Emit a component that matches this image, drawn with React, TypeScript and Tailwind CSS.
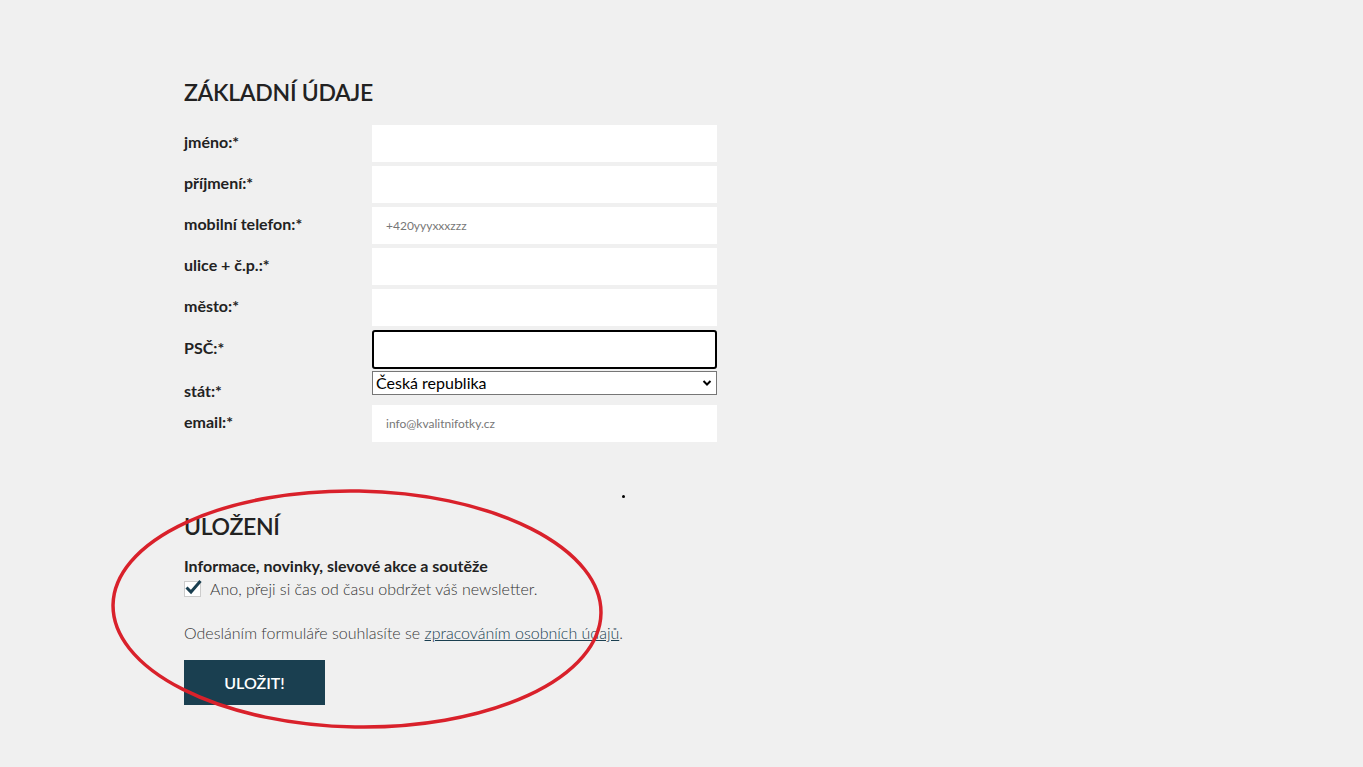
import React from "react";

const rows: { label: string; placeholder?: string; kind?: string }[] = [
  { label: "jméno:*" },
  { label: "příjmení:*" },
  { label: "mobilní telefon:*", placeholder: "+420yyyxxxzzz" },
  { label: "ulice + č.p.:*" },
  { label: "město:*" },
  { label: "PSČ:*", kind: "focus" },
];

export default function App() {
  return (
    <div
      className="relative w-full min-h-[767px] bg-[#f0f0f0] text-[#222]"
      style={{ fontFamily: "'Source Sans Pro', Lato, 'Noto Sans', sans-serif" }}
    >
      <div className="pl-[184px] pt-[78px]">
        <h2 className="text-[23px] font-semibold leading-[28px] tracking-[-0.3px] text-[#222]">ZÁKLADNÍ ÚDAJE</h2>
        <div className="mt-[19px] flex flex-col gap-[4px] w-[533px]">
          {rows.map((r) => (
            <div key={r.label} className="flex items-center">
              <div className="w-[188px] text-[16px] font-bold -mt-[3px]">{r.label}</div>
              {r.kind === "focus" ? (
                <div className="w-[345px] h-[39px] bg-white border-2 border-black rounded-[3px]" />
              ) : (
                <div className="w-[345px] h-[37px] bg-white flex items-center pl-[14px] text-[12px] text-[#777]">
                  {r.placeholder}
                </div>
              )}
            </div>
          ))}
          <div className="flex items-end -mt-[2px]">
            <div className="w-[188px] text-[16px] font-bold leading-[20px] -mb-[6px]">stát:*</div>
            <div className="w-[345px] h-[24px] bg-white border border-[#767676] flex items-center justify-between pl-[3px] pr-[4px] text-[16px] text-black">
              <span>Česká republika</span>
              <svg width="10" height="8" viewBox="0 0 10 8"><path d="M1.5 2 L5 5.5 L8.5 2" stroke="#000" strokeWidth="2" fill="none" /></svg>
            </div>
          </div>
          <div className="flex items-start mt-[6px]">
            <div className="w-[188px] text-[16px] font-bold leading-[20px] mt-[7px]">email:*</div>
            <div className="w-[345px] h-[37px] bg-white flex items-center pl-[14px] text-[12px] text-[#777]">info@kvalitnifotky.cz</div>
          </div>
        </div>
        <div className="h-[54px] relative">
          <div className="absolute left-[438px] top-[53px] w-[3px] h-[3px] rounded-full bg-black" />
        </div>
        <h2 className="mt-[16px] text-[23px] font-semibold leading-[28px] tracking-[-0.3px] text-[#222]">ULOŽENÍ</h2>
        <div className="mt-[16px] text-[16px] font-bold leading-[20px]">Informace, novinky, slevové akce a soutěže</div>
        <div className="mt-[1px] flex items-center gap-[9px]">
          <div className="w-[17px] h-[16px] bg-white border border-[#ccc] relative">
            <svg className="absolute -left-[1px] -top-[4px]" width="20" height="18" viewBox="0 0 20 18">
              <path d="M2.5 9.5 L7 14 L16.5 3" stroke="#1a3f50" strokeWidth="3" fill="none" />
            </svg>
          </div>
          <span className="text-[16px] font-light text-[#333]">Ano, přeji si čas od času obdržet váš newsletter.</span>
        </div>
        <div className="mt-[20px] text-[16px] font-light text-[#3a3a3a]">
          Odesláním formuláře souhlasíte se <span className="underline text-[#1a3f50]">zpracováním osobních údajů</span>.
        </div>
        <button className="mt-[15px] w-[141px] h-[45px] bg-[#1a3f50] text-white text-[16px] font-semibold">ULOŽIT!</button>
      </div>
      <svg className="absolute left-0 top-0 pointer-events-none" width="1363" height="767">
        <ellipse cx="357" cy="609" rx="244" ry="118" transform="rotate(1 357 609)" fill="none" stroke="#d9212b" strokeWidth="3.5" />
      </svg>
    </div>
  );
}
